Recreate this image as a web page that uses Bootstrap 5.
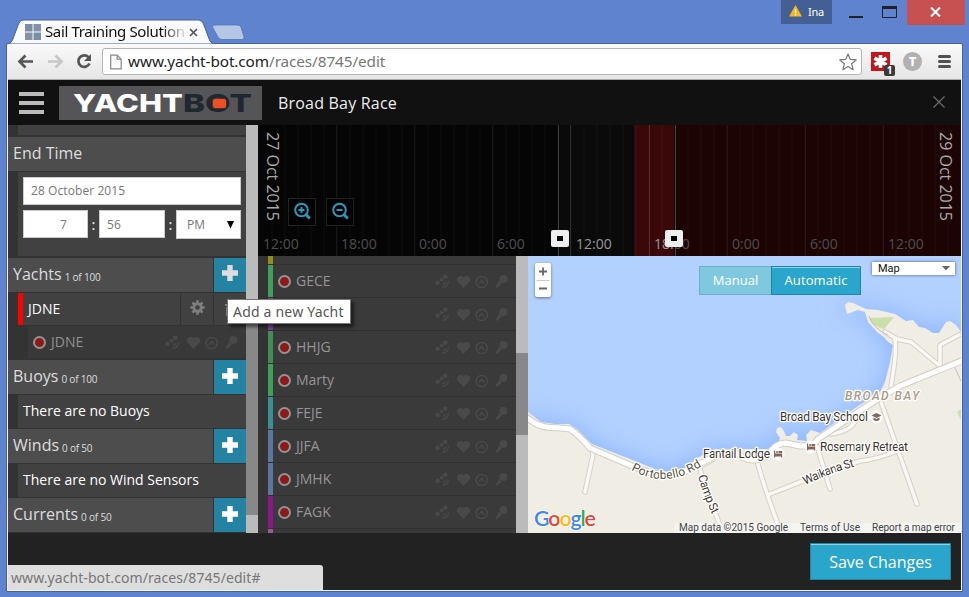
<!DOCTYPE html>
<html lang="en">
<head>
<meta charset="utf-8">
<title>Sail Training Solutions</title>
<link href="https://cdn.jsdelivr.net/npm/bootstrap@5.3.0/dist/css/bootstrap.min.css" rel="stylesheet">
<style>
html,body{width:969px;height:597px;overflow:hidden}
body{background:#5f83ce;font-family:"Open Sans","Noto Sans",sans-serif;font-size:14px;line-height:1}
svg{display:block;flex:none}
.ui{font-family:"Noto Sans","Open Sans",sans-serif}
.titlebar{height:44px}
.browser-tab{width:206px;height:25px;margin:19px 0 0 7px}
.tab-shape{left:0;top:0}
.tab-content{padding:3px 0 0 18px}
.tab-title{font-size:15px;color:#111;width:140px;height:20px;line-height:18px;white-space:nowrap;margin-left:4px;letter-spacing:-.37px;-webkit-mask-image:linear-gradient(90deg,#000 84%,rgba(0,0,0,.2) 98%)}
.profile{width:51px;height:24px;background:#445f94;color:#fff;font-size:11px;padding:0 0 2px 8px;gap:6px;letter-spacing:-.3px}
.win-close{width:58px;height:25px;background:#c75050;margin-right:4px;padding:0 2px 2px 0}
.shell{width:957px;height:549px;margin:-1px 0 0 6px;border:1px solid #46619b;border-radius:2px 2px 0 0;padding:0 1px 1px;background:#f4f5f7}
.toolbar{height:36px;background:linear-gradient(#fafafa,#e5e5e5);border-bottom:1px solid #aaa;padding:4px 0 0 9px}
.omnibox{width:760px;height:27px;border:1px solid #b4b4b4;border-radius:3px;background:#fff;padding:0 4px 0 7px}
.url{font-size:15.3px;color:#222;margin-left:6px;white-space:nowrap;letter-spacing:-.08px}
.url .path{color:#777}
.app-head{height:45px;background:#111;padding:0 15px 0 11px}
.burger i{display:block;width:25px;height:4px;background:#bbb;margin-bottom:5px}
.race-title{font-size:16px;color:#eee;margin-left:16px;letter-spacing:.2px}
.main-row{height:408px}
.side{width:238px;background:#333;overflow:hidden}
.sec-head{height:34px;background:#4d4d4d;color:#ddd;font-size:16px;padding-left:5px;flex:none}
.sec-head .lbl{padding-bottom:2px}
.sec-head .cnt{font-size:10px;margin-left:3px;padding-top:3px;letter-spacing:-.2px}
.add-btn{width:33px;height:34px;background:#2483a3;border-left:1px solid #333}
.sub{background:#414141;margin-left:10px;flex:none}
.sub.note{height:33px;margin-top:1px;margin-bottom:1px;color:#fff;padding:0 0 2px 5px;font-size:14px}
.field{background:#fff;border:1px solid #ccc;height:28px;font-size:12px;color:#777;padding:0 7px;letter-spacing:.08px}
.colon{color:#ddd;width:11px;text-align:center;font-size:14px;font-weight:600}
.cell{border-left:1px solid #333;width:33px;height:32px}
.jrow{height:32px;margin-top:1px;border-left:5px solid #f00;color:#fff;padding-left:5px}
.nested{height:32px;margin:1px 0 2px 20px;background:#393939;color:#919191;padding:0 7px 0 5px}
.vscroll{width:12px;background:#bbb;padding-top:194px}
.vscroll .thumb{height:196px;background:#888}
.vscroll2{width:12px;background:#bbb;padding-top:97px}
.vscroll2 .thumb{height:82px;background:#888}
.lower{height:277px}
.fleet{width:258px;background:#3a3a3a;border-left:10px solid #333;overflow:hidden}
.fleet .boat{height:33px;border-bottom:1px solid #303030;color:#959595;padding-right:7px;flex:none}
.fleet .stripe{width:5px;height:32px;margin-right:5px}
.fleet .first{height:9px}.fleet .first .stripe{height:8px}
.c-olive{background:#918e1e}.c-green{background:#3f9e57}.c-green2{background:#3f8c55}.c-purple{background:#7c3ea0}
.c-teal{background:#398e98}.c-blue{background:#5a779f}.c-mag{background:#8a178a}.c-pink{background:#a05a92}
.rec{width:13px;height:13px;border-radius:50%;border:2px solid #949494;background:#8e1919;margin-right:5px;flex:none}
.map-area{width:433px;height:277px}
.zoom-ctl{left:7px;top:7px;width:16px;height:34px;background:#fff;border-radius:2px;box-shadow:0 1px 3px rgba(0,0,60,.5)}
.mode{left:171px;top:10px}
.mode div{height:29px;border:1px solid #2483a3;color:#fff;font-size:13px;line-height:27px;text-align:center}
.mode .man{width:72px;background:#7fc8df;border-color:#6bb0c6;border-right:0}
.mode .aut{width:90px;background:#2aa5cb;box-shadow:inset 0 1px #8fd2e6;letter-spacing:.1px}
.map-type{left:344px;top:6px;width:83px;height:13px;background:#fff;font-family:Roboto,sans-serif;font-size:11px;color:#111;padding:0 4px 0 6px;box-shadow:0 0 3px rgba(0,0,60,.6)}
.foot{height:57px;background:#222;padding:10px 10px 0 0}
.save{width:141px;height:37px;background:#2aa5cb;border:1px solid #2483a3;box-shadow:inset 0 1px #8fd2e6;color:#fff;font-size:16px;line-height:36px;text-align:center;border-radius:0;padding:0}
.status{left:8px;top:565px;width:315px;height:25px;background:#dedede;border-radius:0 3px 0 0;color:#777;font-size:14px;line-height:25px;padding-left:3px;letter-spacing:.08px}
.tip{left:227px;top:299px;width:124px;height:25px;background:#fff;border:1px solid #777;box-shadow:3px 3px 3px rgba(0,0,0,.5);color:#575757;font-size:14px;line-height:24px;padding-left:5px;white-space:nowrap;letter-spacing:.2px}
</style>
<script src="https://cdn.jsdelivr.net/npm/bootstrap@5.3.0/dist/js/bootstrap.bundle.min.js"></script>
</head>
<body>
<svg width="0" height="0" class="position-absolute">
<defs>
<symbol id="sensors" viewBox="0 0 74 16">
<g fill="#494949" stroke="none">
<circle cx="10.300" cy="3.700" r="2.300"/><circle cx="2.600" cy="9.700" r="2.300"/><rect x="5" y="5" width="3.400" height="3.400" transform="rotate(45 6.700 6.700)"/>
<path d="M28.500 15l-5.900-6.200a3.500 3.500 0 0 1 5.900-4.300 3.500 3.500 0 0 1 5.900 4.300z"/>
<circle cx="68.400" cy="6" r="4"/><path d="M64.300 7.800l2.600 2.600-5 4.600-1.400-1.400z"/></g>
<g fill="none" stroke="#494949" stroke-width="1.500"><path d="M10.500 8.800q-.3 2.400-2.700 2.700M13.200 8.300q0 5.900-5.900 5.900"/><circle cx="46.700" cy="9" r="5.600"/><path d="M44.200 10.700l2.500-3.500 2.500 3.500"/></g>
</symbol>
<symbol id="plus" viewBox="0 0 16 16"><path d="M5.300 0h5.400v5.300H16v5.400h-5.300V16H5.300v-5.300H0V5.300h5.300z"/></symbol>
</defs></svg>

<header class="titlebar d-flex ui">
  <div class="browser-tab position-relative">
    <svg class="tab-shape position-absolute" width="208" height="25"><path d="M0 25Q4 25 5.500 21L11.500 5Q13 1 16 1H192Q195 1 196.500 5L202.500 21Q204 25 208 25Z" fill="#fafafa" stroke="#46619b"/></svg>
    <div class="tab-content position-relative d-flex align-items-start">
      <svg width="16" height="16" style="margin-top:2px"><rect y="0" x="0" width="7.500" height="7.500" fill="#7b8da0"/><rect x="8.500" width="7.500" height="7.500" fill="#8294a6"/><rect y="8.500" width="7.500" height="7.500" fill="#8294a6"/><rect x="8.500" y="8.500" width="7.500" height="7.500" fill="#7b8da0"/></svg>
      <span class="tab-title">Sail Training Solution</span>
      <svg width="9" height="9" style="margin:6px 0 0 4px"><path d="M1 1l7 7M8 1L1 8" stroke="#555" stroke-width="1.700"/></svg>
    </div>
  </div>
  <svg width="32" height="17" class="align-self-end" style="margin-bottom:3px"><path d="M2 1H24Q27 1 28 3L31 13Q31.500 15.500 29 15.500H9Q6.500 15.500 5 13L-.5 3Q-1 1 2 1Z" fill="#b5c5e4" stroke="#4e6dae" stroke-width=".7"/></svg>
  <div class="profile d-flex align-items-center ms-auto"><svg width="13" height="12"><path d="M6.500 0L13 11.500H0Z" fill="#f6b91d"/><path d="M6.500 4v4M6.500 9v1.400" stroke="#fff" stroke-width="1.300"/></svg>Ina</div>
  <svg width="75" height="25"><path d="M17 17H31" stroke="#222" stroke-width="2"/><path d="M50.500 8v9.500h14V8" fill="none" stroke="#222"/><path d="M50 7.500h15" stroke="#222" stroke-width="3"/></svg>
  <div class="win-close d-flex justify-content-center align-items-center"><svg width="11" height="10"><path d="M1 .5l9 9M10 .5l-9 9" stroke="#fff" stroke-width="2"/></svg></div>
</header>

<div class="shell">
  <div class="toolbar d-flex ui">
    <svg width="85" height="27"><g fill="none" stroke="#555" stroke-width="2.700"><path d="M2.500 13.500H16M8.500 7.500l-6 6 6 6"/><path d="M31 13.500H44M38.500 7.500l6 6-6 6" stroke="#c8c8c8"/><path d="M71.500 9.200A5.800 5.800 0 1 0 72.500 15.500"/></g><path d="M74 6v7h-7z" fill="#555"/></svg>
    <div class="omnibox d-flex align-items-center">
      <svg width="12" height="16"><path d="M.7 1.200h6.500l4 4v9.600H.7zM7.200 1.200v4h4" fill="#fafafa" stroke="#888" stroke-width="1.200"/></svg>
      <span class="url">www.yacht-bot.com<span class="path">/races/8745/edit</span></span>
      <svg width="18" height="18" viewBox="0 0 18 18" class="ms-auto"><path d="M9 .9l2.300 5.500 6 .5-4.600 3.900 1.400 5.900L9 13.500l-5.100 3.200 1.400-5.900L.7 6.900l6-.5z" fill="#fff" stroke="#777" stroke-width="1.200" stroke-linejoin="round"/></svg>
    </div>
    <svg width="90" height="30" viewBox="0 0 90 30"><rect x="9" y="4" width="19" height="19" fill="#c4161c"/><g stroke="#fff" stroke-width="3.600"><path d="M18.500 7v13M12.500 10.200l12 6.600M24.500 10.200l-12 6.600"/></g><rect x="22" y="17" width="11" height="11" rx="2" fill="#3a3a3a"/><text x="27.500" y="26" font-size="10" font-weight="700" fill="#fff" text-anchor="middle">1</text><circle cx="50.500" cy="13.500" r="9.500" fill="#b1b1b1"/><text x="50.500" y="18.300" font-size="13" font-weight="800" fill="#fff" text-anchor="middle">T</text><path d="M77.500 8.500h10M77.500 13.500h10M77.500 18.500h10" stroke="#505050" stroke-width="3" stroke-linecap="round"/></svg>
  </div>

  <div class="app-head d-flex align-items-center">
    <div class="burger" style="padding-top:5px"><i></i><i></i><i></i></div>
    <svg width="203" height="34" viewBox="59 85 203 34" style="margin-left:15px"><rect x="59" y="85" width="203" height="34" fill="#555557"/><g font-family="Inter,sans-serif" font-weight="800" font-size="25"><text x="73" y="111.300" fill="#fff" textLength="110" lengthAdjust="spacingAndGlyphs">YACHT</text><text x="183" y="111.300" fill="#20282f" textLength="69" lengthAdjust="spacingAndGlyphs">BOT</text></g><rect x="212.500" y="97.500" width="14" height="10" rx="2.500" fill="#f04e23" stroke="#20282f" stroke-width=".6"/></svg>
    <span class="race-title">Broad Bay Race</span>
    <svg width="14" height="14" class="ms-auto" style="margin-bottom:2px"><path d="M1.500 1.500l11 11M12.500 1.500l-11 11" stroke="#6c6c6c" stroke-width="1.200"/></svg>
  </div>

  <div class="main-row d-flex">
    <aside class="side d-flex flex-column">
      <div class="sub" style="height:10px;margin-bottom:2px"></div>
      <div class="sec-head d-flex align-items-center"><span class="lbl">End Time</span></div>
      <div class="sub" style="height:84px;margin-top:1px;margin-bottom:2px;padding:5px 5px 0">
        <div class="field d-flex align-items-center">28 October 2015</div>
        <div class="d-flex" style="margin-top:5px">
          <div class="field d-flex align-items-center" style="width:65px;padding:2px 0 0 36px">7</div><span class="colon pt-2">:</span>
          <div class="field d-flex align-items-center" style="width:66px;padding-top:2px">56</div><span class="colon pt-2">:</span>
          <div class="field d-flex align-items-center justify-content-between" style="width:65px;height:29px;padding:0 6px 0 10px">PM<svg width="7" height="8"><path d="M0 0h7L3.500 7.500z" fill="#000"/></svg></div>
        </div>
      </div>
      <div class="sec-head d-flex align-items-center"><span class="lbl">Yachts</span><span class="cnt">1 of 100</span><div class="add-btn ms-auto d-flex align-items-center justify-content-center"><svg width="16" height="16" fill="#ddd" class="mb-1"><use href="#plus"/></svg></div></div>
      <div class="sub jrow d-flex align-items-center">JDNE
        <div class="cell ms-auto d-flex align-items-center justify-content-center"><svg width="15" height="15" viewBox="-7.500 -7.500 15 15" class="mb-1"><circle r="3.700" fill="none" stroke="#7d7d7d" stroke-width="3"/><path d="M0-7.200V7.200M-7.200 0H7.200M-5-5L5 5M5-5L-5 5" stroke="#7d7d7d" stroke-width="2.600"/><circle r="2.300" fill="#414141"/></svg></div>
        <div class="cell d-flex align-items-center justify-content-center"><svg width="13" height="14"><path d="M1 2h11v2H1zM2 5h9v9H2zM4 0h5v2H4z" fill="#7d7d7d"/></svg></div>
      </div>
      <div class="nested d-flex align-items-center"><span class="rec"></span>JDNE<svg width="74" height="16" class="ms-auto"><use href="#sensors"/></svg></div>
      <div class="sec-head d-flex align-items-center"><span class="lbl">Buoys</span><span class="cnt">0 of 100</span><div class="add-btn ms-auto d-flex align-items-center justify-content-center"><svg width="16" height="16" fill="#fff" style="margin-bottom:3px"><use href="#plus"/></svg></div></div>
      <div class="sub note d-flex align-items-center">There are no Buoys</div>
      <div class="sec-head d-flex align-items-center"><span class="lbl">Winds</span><span class="cnt">0 of 50</span><div class="add-btn ms-auto d-flex align-items-center justify-content-center"><svg width="16" height="16" fill="#fff" style="margin-bottom:3px"><use href="#plus"/></svg></div></div>
      <div class="sub note d-flex align-items-center">There are no Wind Sensors</div>
      <div class="sec-head d-flex align-items-center"><span class="lbl">Currents</span><span class="cnt">0 of 50</span><div class="add-btn ms-auto d-flex align-items-center justify-content-center"><svg width="16" height="16" fill="#fff" style="margin-bottom:3px"><use href="#plus"/></svg></div></div>
    </aside>
    <div class="vscroll"><div class="thumb"></div></div>

    <section class="flex-grow-1">
      <svg width="703" height="131" viewBox="258 125 703 131">
        <defs><pattern id="hours" x="258.500" y="0" width="13" height="131" patternUnits="userSpaceOnUse"><path d="M.5 0V260" stroke="#fff" stroke-opacity=".03"/></pattern></defs>
        <rect x="258" y="125" width="301" height="131" fill="#050505"/><rect x="559" y="125" width="75" height="131" fill="#0a0a0a"/><rect x="634" y="125" width="41" height="131" fill="#3a0808"/><rect x="675" y="125" width="286" height="131" fill="#1c0404"/>
        <rect x="258" y="125" width="703" height="131" fill="url(#hours)"/>
        <path d="M336.500 125v131M414.500 125v131M492.500 125v131M727.500 125v131M805.500 125v131M883.500 125v131" stroke="#fff" stroke-opacity=".06"/>
        <path d="M570.500 125v131M649.500 125v131" stroke="#fff" stroke-opacity=".13"/>
        <path d="M558.500 125v131" stroke="#3a3a3a"/><path d="M674.500 125v131" stroke="#000"/><path d="M675.500 125v131" stroke="#4a4444"/>
        <g font-size="14" fill="#4e4e4e"><text x="263" y="249">12:00</text><text x="341" y="249">18:00</text><text x="419" y="249">0:00</text><text x="497" y="249">6:00</text><text x="576" y="249" fill="#999">12:00</text><text x="654" y="249"><tspan fill="#999">18:</tspan>00</text><text x="732" y="249">0:00</text><text x="810" y="249">6:00</text><text x="888" y="249">12:00</text></g>
        <g font-size="16" fill="#aaa"><text transform="translate(267 132) rotate(90)" textLength="89">27 Oct 2015</text><text transform="translate(940 132) rotate(90)" textLength="89">29 Oct 2015</text></g>
        <g fill="#000" stroke="#222"><rect x="288.500" y="198.500" width="27" height="27"/><rect x="326.500" y="198.500" width="27" height="27"/></g>
        <g fill="none" stroke="#269abf" stroke-width="2"><circle cx="301.500" cy="210" r="6.300"/><circle cx="339.500" cy="210" r="6.300"/><path d="M298.500 210h6M301.500 207v6M336.500 210h6"/><path d="M305.800 214.500l4 4M343.800 214.500l4 4" stroke-width="2.800"/></g>
        <g fill="#eee"><rect x="551" y="230" width="18" height="17" rx="2"/><rect x="665" y="230" width="18" height="17" rx="2"/></g><rect x="557" y="236" width="6" height="5"/><rect x="671" y="236" width="6" height="5"/>
      </svg>
      <div class="lower d-flex">
        <div class="fleet d-flex flex-column">
          <div class="boat first"><div class="stripe c-olive"></div></div>
          <div class="boat d-flex align-items-center"><i class="stripe c-green"></i><span class="rec"></span>GECE<svg width="74" height="16" class="ms-auto"><use href="#sensors"/></svg></div>
          <div class="boat d-flex align-items-center"><i class="stripe c-purple"></i><svg width="74" height="16" class="ms-auto"><use href="#sensors"/></svg></div>
          <div class="boat d-flex align-items-center"><i class="stripe c-green2"></i><span class="rec"></span>HHJG<svg width="74" height="16" class="ms-auto"><use href="#sensors"/></svg></div>
          <div class="boat d-flex align-items-center"><i class="stripe c-green"></i><span class="rec"></span>Marty<svg width="74" height="16" class="ms-auto"><use href="#sensors"/></svg></div>
          <div class="boat d-flex align-items-center"><i class="stripe c-teal"></i><span class="rec"></span>FEJE<svg width="74" height="16" class="ms-auto"><use href="#sensors"/></svg></div>
          <div class="boat d-flex align-items-center"><i class="stripe c-blue"></i><span class="rec"></span>JJFA<svg width="74" height="16" class="ms-auto"><use href="#sensors"/></svg></div>
          <div class="boat d-flex align-items-center"><i class="stripe c-blue"></i><span class="rec"></span>JMHK<svg width="74" height="16" class="ms-auto"><use href="#sensors"/></svg></div>
          <div class="boat d-flex align-items-center"><i class="stripe c-mag"></i><span class="rec"></span>FAGK<svg width="74" height="16" class="ms-auto"><use href="#sensors"/></svg></div>
          <div class="boat"><div class="stripe c-pink"></div></div>
        </div>
        <div class="vscroll2"><div class="thumb"></div></div>
        <div class="map-area position-relative">
          <svg width="433" height="277" viewBox="528 256 433 277">
            <defs><filter id="soft" x="-20%" y="-20%" width="140%" height="140%"><feGaussianBlur stdDeviation="12"/></filter>
            <path id="land" d="M528 412L541 422 555 424 569 424 578 430 592 444 630 459 655 469 668 472 684 468 697 458 715 449 755 449 770 449 778 443 780 438 776 432 777 428 781 427 784 431 786 436 790 436 794 432 798 435 797 440 807 441 806 435 811 430 820 433 855 408 880 392 885 382 890 362 893 345 888 342 885 338 877 332 868 322 865 312 858 310 850 313 847 314 845 305 848 302 853 303 866 309 878 310 895 314 906 321 913 320 919 327 925 328 933 333 939 333 946 322 950 321 956 325 961 332V533H528Z"/></defs>
            <rect x="528" y="256" width="433" height="277" fill="#b3d1ff"/>
            <use href="#land" fill="#8fb6ff" stroke="#8fb6ff" stroke-width="4" filter="url(#soft)"/>
            <use href="#land" fill="#f0ede5"/>
            <path d="M869 318l25-1-10 12q-11-2-15-11zM961 409l-4 3 4 8z" fill="#cbdfab"/>
            <g fill="none" stroke-linejoin="round" stroke-linecap="round">
              <path d="M592 448L593 455 585 492M700 466Q714 460 722 452M700 468Q702 480 722 530M757 461Q765 490 781 533M770 494Q835 468 860 461 875 460 900 450M817 446L830 489M881 402L917 504M830 434Q850 432 856 420M885 332L897 339 911 342 940 366V345L959 335M895 340Q897 352 891 386" stroke="#d6d1c8" stroke-width="5.500"/>
              <path d="M592 448L593 455 585 492M700 466Q714 460 722 452M700 468Q702 480 722 530M757 461Q765 490 781 533M770 494Q835 468 860 461 875 460 900 450M817 446L830 489M881 402L917 504M830 434Q850 432 856 420M885 332L897 339 911 342 940 366V345L959 335M895 340Q897 352 891 386" stroke="#faf8f5" stroke-width="3.500"/>
              <path d="M869 316Q872 328 888 335M955 368L961 381" stroke="#c6bfb4" stroke-width="1"/>
              <path d="M526 417Q538 427 550 427.500T570 429Q580 436 590 448L632 466Q668 482 692 468L722 452Q738 452 742 457 755 464 768 455 775 443 786 443L800 446Q815 446 818 439L858 412 881 397 900 386 961 361" stroke="#d3cec4" stroke-width="7"/>
              <path d="M526 417Q538 427 550 427.500T570 429Q580 436 590 448L632 466Q668 482 692 468L722 452Q738 452 742 457 755 464 768 455 775 443 786 443L800 446Q815 446 818 439L858 412 881 397 900 386 964 360" stroke="#fff" stroke-width="5"/>
              <path id="port" d="M631 470Q668 491 706 463"/><path id="camp" d="M698 476Q704 498 714 518"/><path id="waik" d="M805 485Q830 473 856 466"/>
            </g>
            <g fill="#fff"><circle cx="876" cy="417" r="6.500"/><circle cx="811" cy="447" r="6.500"/><circle cx="778" cy="454" r="6.500"/></g>
            <g fill="#86655b"><path d="M871.500 415.500l5-2.500 5 2.500-5 2.500zM873.500 417.500v2.500q3 2 6 0v-2.500l-3 1.500zM807 443.500h1.200v3h7v4H814v-1h-5.800v1H807zM774 450.500h1.200v3h7v4H781v-1h-5.800v1H774z"/><circle cx="810" cy="445" r="1"/><circle cx="777" cy="452" r="1"/><path d="M811.500 444h3.700v2h-3.700zM778.500 451h3.700v2h-3.700z"/></g>
            <g font-family="Roboto,sans-serif" font-size="12" fill="#3c332c" stroke="#fff" stroke-width="2.600" stroke-linejoin="round" paint-order="stroke">
              <text x="780" y="421" textLength="88">Broad Bay School</text><text x="703" y="458" textLength="67">Fantail Lodge</text><text x="820" y="451" textLength="88">Rosemary Retreat</text>
              <text x="845" y="400" textLength="74" font-style="italic" font-weight="500" fill="#a99b84">BROAD BAY</text>
              <text fill="#5a5040"><textPath href="#port" textLength="75">Portobello Rd</textPath></text><text><textPath href="#camp" textLength="41">Camp St</textPath></text><text><textPath href="#waik" textLength="53">Waikana St</textPath></text>
            </g>
            <text x="534" y="526" font-family="Lato,sans-serif" font-weight="600" font-size="21.500" textLength="62" stroke="#fff" stroke-width="1.500" paint-order="stroke"><tspan fill="#4285f4">G</tspan><tspan fill="#ea4335">o</tspan><tspan fill="#fbbc05">o</tspan><tspan fill="#4285f4">g</tspan><tspan fill="#34a853">l</tspan><tspan fill="#ea4335">e</tspan></text>
            <rect x="674" y="523" width="287" height="10" fill="#f5f5f5" fill-opacity=".8"/>
            <g font-family="Roboto,sans-serif" font-size="10" fill="#444"><text x="679" y="531" textLength="109">Map data ©2015 Google</text><text x="800" y="531" textLength="60">Terms of Use</text><text x="872" y="531" textLength="83">Report a map error</text></g>
          </svg>
          <div class="zoom-ctl position-absolute"><svg width="16" height="34"><path d="M4 8.500h8M8 4.500v8M4 25.500h8" stroke="#666" stroke-width="1.800"/><path d="M1.500 17.500h13" stroke="#ccc"/></svg></div>
          <div class="mode position-absolute d-flex"><div class="man">Manual</div><div class="aut">Automatic</div></div>
          <div class="map-type position-absolute d-flex align-items-center justify-content-between">Map<svg width="9" height="5"><path d="M0 0h8L4 4.500z" fill="#666"/></svg></div>
        </div>
      </div>
    </section>
  </div>
  <footer class="foot d-flex justify-content-end"><button class="btn save">Save Changes</button></footer>
</div>
<div class="status ui position-absolute">www.yacht-bot.com/races/8745/edit#</div>
<div class="tip ui position-absolute">Add a new Yacht</div>
</body>
</html>
